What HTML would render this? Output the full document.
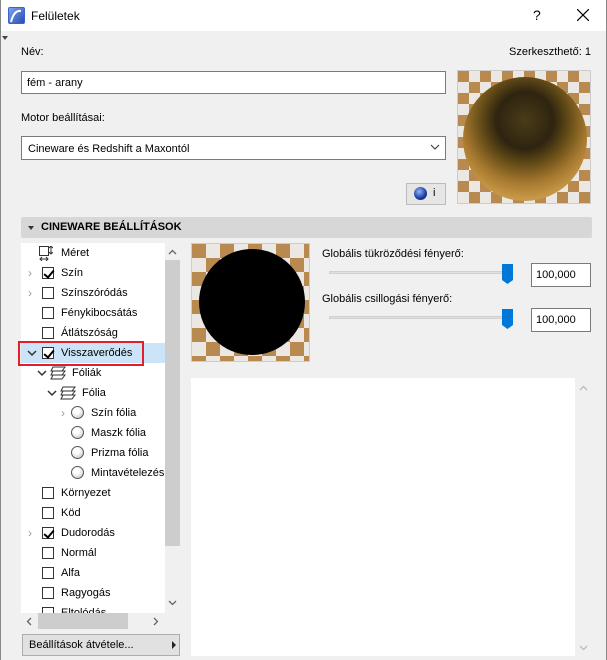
<!DOCTYPE html>
<html><head><meta charset="utf-8"><style>
*{margin:0;padding:0;box-sizing:border-box}
body{width:607px;height:660px;background:#f0f0f0;font-family:"Liberation Sans",Arial,sans-serif;font-size:11px;color:#000;position:relative;overflow:hidden}
.a{position:absolute}
.frame{left:0;top:0;width:607px;height:660px;border-left:1px solid #888;border-right:1px solid #888}
.title{left:1px;top:0;width:605px;height:31px;background:#fff}
.inp{background:#fff;border:1px solid #7a7a7a}
.tree .r{position:absolute;left:0;height:20px;line-height:20px;white-space:nowrap;font-size:11px}
.cb{position:absolute;width:12px;height:12px;border:1px solid #333;background:#fff;top:4px}
.cb.c::after{content:"";position:absolute;left:3px;top:0px;width:4px;height:8px;border:solid #000;border-width:0 2px 2px 0;transform:rotate(40deg)}
.ar{position:absolute;top:0;color:#999;font-size:12px}
.rad{position:absolute;width:13px;height:13px;border-radius:50%;border:1px solid #555;background:radial-gradient(circle at 40% 35%,#fff 30%,#ccc 80%);top:3px}
</style></head><body>
<div class="a frame"></div>
<div class="a title"></div>
<svg class="a" style="left:8px;top:7px" width="17" height="17"><rect x="0" y="0" width="17" height="17" rx="2" fill="#3a64c8"/><rect x="1" y="1" width="15" height="15" fill="url(#g)"/><defs><linearGradient id="g" x1="0" y1="0" x2="1" y2="1"><stop offset="0" stop-color="#7da0ef"/><stop offset="1" stop-color="#2a4fb5"/></linearGradient></defs><path d="M3 15 Q6 3 13 4" stroke="#fff" stroke-width="2" fill="none"/></svg>
<div class="a" style="left:31px;top:9px;font-size:12px">Felületek</div>
<div class="a" style="left:533px;top:7px;font-size:14px">?</div>
<svg class="a" style="left:577px;top:9px" width="12" height="12"><path d="M0 0L12 12M12 0L0 12" stroke="#000" stroke-width="1.2"/></svg>
<div class="a" style="left:2px;top:36px;width:0;height:0;border-left:3px solid transparent;border-right:3px solid transparent;border-top:4px solid #444"></div>

<div class="a" style="left:21px;top:46px">Név:</div>
<div class="a" style="left:509px;top:46px">Szerkeszthető: 1</div>
<div class="a inp" style="left:21px;top:71px;width:425px;height:23px;padding:5px 5px">fém - arany</div>
<div class="a" style="left:21px;top:112px">Motor beállításai:</div>
<div class="a inp" style="left:21px;top:136px;width:425px;height:24px;padding:6px 6px">Cineware és Redshift a Maxontól</div>
<svg class="a" style="left:430px;top:144px" width="10" height="7"><path d="M1 1L5 5L9 1" stroke="#333" fill="none"/></svg>
<div class="a" style="left:406px;top:183px;width:40px;height:22px;border:1px solid #bbb;background:#e6e6e6"></div>
<div class="a" style="left:414px;top:187px;width:13px;height:13px;border-radius:50%;background:radial-gradient(circle at 40% 35%,#8fb6ff,#1b3a9a 60%,#0a1440)"></div>
<div class="a" style="left:433px;top:187px;font-size:11px">i</div>

<div class="a" style="left:457px;top:70px;width:134px;height:134px;border:1px solid #ccc;background:conic-gradient(#ebe8e3 25%,#b88a50 0 50%,#ebe8e3 0 75%,#b88a50 0) 0 0/22px 22px;overflow:hidden">
<div class="a" style="left:5px;top:6px;width:124px;height:124px;border-radius:50%;background:radial-gradient(circle at 50% 35%,#4a3c18 0,#2e2410 28%,#6a5018 45%,#a87a30 62%,#c99a48 78%,#a77a38 92%,#6a4a1a 100%)"></div>
</div>

<div class="a" style="left:21px;top:217px;width:571px;height:21px;background:#d7d7d7;border-radius:2px"></div>
<div class="a" style="left:28px;top:226px;width:0;height:0;border-left:3px solid transparent;border-right:3px solid transparent;border-top:4px solid #333"></div>
<div class="a" style="left:41px;top:221px;font-weight:bold;font-size:11px">CINEWARE BEÁLLÍTÁSOK</div>

<div class="a" style="left:21px;top:243px;width:144px;height:370px;background:#fff;overflow:hidden">
<div class="tree a" style="left:0;top:0;width:144px">
<div class="r" style="top:0"><svg style="position:absolute;left:18px;top:3px" width="14" height="15"><rect x="0.5" y="0.5" width="9" height="9" fill="none" stroke="#333"/><path d="M12 0v8M10 2l2-2 2 2M10 6l2 2 2-2M1 13h8M3 11l-2 2 2 2M7 11l2 2-2 2" stroke="#333" fill="none"/></svg><span style="position:absolute;left:40px">Méret</span></div>
<div class="r" style="top:20px"><span class="ar" style="left:7px">›</span><span class="cb c" style="left:21px"></span><span style="position:absolute;left:40px">Szín</span></div>
<div class="r" style="top:40px"><span class="ar" style="left:7px">›</span><span class="cb" style="left:21px"></span><span style="position:absolute;left:40px">Színszóródás</span></div>
<div class="r" style="top:60px"><span class="cb" style="left:21px"></span><span style="position:absolute;left:40px">Fénykibocsátás</span></div>
<div class="r" style="top:80px"><span class="cb" style="left:21px"></span><span style="position:absolute;left:40px">Átlátszóság</span></div>
<div class="r" style="top:100px;width:144px;background:#cce4f7"><svg style="position:absolute;left:6px;top:7px" width="10" height="7"><path d="M1 1L5 5L9 1" stroke="#333" stroke-width="1.5" fill="none"/></svg><span class="cb c" style="left:21px"></span><span style="position:absolute;left:40px">Visszaverődés</span></div>
<div class="r" style="top:120px"><svg style="position:absolute;left:16px;top:7px" width="10" height="7"><path d="M1 1L5 5L9 1" stroke="#333" stroke-width="1.5" fill="none"/></svg><svg style="position:absolute;left:29px;top:3px" width="16" height="14"><path d="M3 1h12L12 5H1zM3 5h12L12 9H1zM3 9h12L12 13H1z" fill="none" stroke="#333"/></svg><span style="position:absolute;left:51px">Fóliák</span></div>
<div class="r" style="top:140px"><svg style="position:absolute;left:26px;top:7px" width="10" height="7"><path d="M1 1L5 5L9 1" stroke="#333" stroke-width="1.5" fill="none"/></svg><svg style="position:absolute;left:39px;top:3px" width="16" height="14"><path d="M3 1h12L12 5H1zM3 5h12L12 9H1zM3 9h12L12 13H1z" fill="none" stroke="#333"/></svg><span style="position:absolute;left:61px">Fólia</span></div>
<div class="r" style="top:160px"><span class="ar" style="left:40px">›</span><span class="rad" style="left:50px"></span><span style="position:absolute;left:70px">Szín fólia</span></div>
<div class="r" style="top:180px"><span class="rad" style="left:50px"></span><span style="position:absolute;left:70px">Maszk fólia</span></div>
<div class="r" style="top:200px"><span class="rad" style="left:50px"></span><span style="position:absolute;left:70px">Prizma fólia</span></div>
<div class="r" style="top:220px"><span class="rad" style="left:50px"></span><span style="position:absolute;left:70px">Mintavételezés</span></div>
<div class="r" style="top:240px"><span class="cb" style="left:21px"></span><span style="position:absolute;left:40px">Környezet</span></div>
<div class="r" style="top:260px"><span class="cb" style="left:21px"></span><span style="position:absolute;left:40px">Köd</span></div>
<div class="r" style="top:280px"><span class="ar" style="left:7px">›</span><span class="cb c" style="left:21px"></span><span style="position:absolute;left:40px">Dudorodás</span></div>
<div class="r" style="top:300px"><span class="cb" style="left:21px"></span><span style="position:absolute;left:40px">Normál</span></div>
<div class="r" style="top:320px"><span class="cb" style="left:21px"></span><span style="position:absolute;left:40px">Alfa</span></div>
<div class="r" style="top:340px"><span class="cb" style="left:21px"></span><span style="position:absolute;left:40px">Ragyogás</span></div>
<div class="r" style="top:360px"><span class="cb" style="left:21px"></span><span style="position:absolute;left:40px">Eltolódás</span></div>
</div></div>
<div class="a" style="left:18px;top:341px;width:126px;height:25px;border:2px solid #e0202a"></div>
<div class="a" style="left:165px;top:243px;width:15px;height:370px;background:#f0f0f0"></div>
<div class="a" style="left:165px;top:260px;width:15px;height:286px;background:#cdcdcd"></div>
<svg class="a" style="left:168px;top:249px" width="9" height="6"><path d="M1 5L4.5 1.5L8 5" stroke="#666" stroke-width="1.3" fill="none"/></svg>
<svg class="a" style="left:168px;top:600px" width="9" height="6"><path d="M1 1L4.5 4.5L8 1" stroke="#666" stroke-width="1.3" fill="none"/></svg>
<div class="a" style="left:21px;top:613px;width:144px;height:16px;background:#f0f0f0"></div>
<div class="a" style="left:38px;top:613px;width:90px;height:16px;background:#cdcdcd"></div>
<svg class="a" style="left:26px;top:617px" width="6" height="9"><path d="M5 1L1.5 4.5L5 8" stroke="#666" stroke-width="1.3" fill="none"/></svg>
<svg class="a" style="left:153px;top:617px" width="6" height="9"><path d="M1 1L4.5 4.5L1 8" stroke="#666" stroke-width="1.3" fill="none"/></svg>
<div class="a" style="left:22px;top:634px;width:158px;height:22px;border:1px solid #adadad;background:#e1e1e1;padding:4px 6px">Beállítások átvétele...</div>
<div class="a" style="left:172px;top:641px;width:0;height:0;border-top:4px solid transparent;border-bottom:4px solid transparent;border-left:4px solid #222"></div>

<div class="a" style="left:191px;top:243px;width:119px;height:119px;border:1px solid #ccc;background:conic-gradient(#ebe8e3 25%,#b88a50 0 50%,#ebe8e3 0 75%,#b88a50 0) 0 0/28px 28px;overflow:hidden">
<div class="a" style="left:7px;top:5px;width:106px;height:106px;border-radius:50%;background:#000"></div>
</div>
<div class="a" style="left:322px;top:248px">Globális tükröződési fényerő:</div>
<div class="a" style="left:329px;top:271px;width:184px;height:3px;background:#e0e0e0;border:1px solid #d0d0d0"></div>
<svg class="a" style="left:502px;top:264px" width="11" height="20"><path d="M0 0H11V16L5.5 20L0 16Z" fill="#0078d7"/></svg>
<div class="a inp" style="left:531px;top:263px;width:60px;height:24px;padding:5px 4px">100,000</div>
<div class="a" style="left:322px;top:293px">Globális csillogási fényerő:</div>
<div class="a" style="left:329px;top:316px;width:184px;height:3px;background:#e0e0e0;border:1px solid #d0d0d0"></div>
<svg class="a" style="left:502px;top:309px" width="11" height="20"><path d="M0 0H11V16L5.5 20L0 16Z" fill="#0078d7"/></svg>
<div class="a inp" style="left:531px;top:308px;width:60px;height:24px;padding:5px 4px">100,000</div>

<div class="a" style="left:191px;top:378px;width:384px;height:278px;background:#fff"></div>
<svg class="a" style="left:579px;top:385px" width="9" height="6"><path d="M1 5L4.5 1.5L8 5" stroke="#bbb" stroke-width="1.3" fill="none"/></svg>
<svg class="a" style="left:579px;top:645px" width="9" height="6"><path d="M1 1L4.5 4.5L8 1" stroke="#bbb" stroke-width="1.3" fill="none"/></svg>
</body></html>
